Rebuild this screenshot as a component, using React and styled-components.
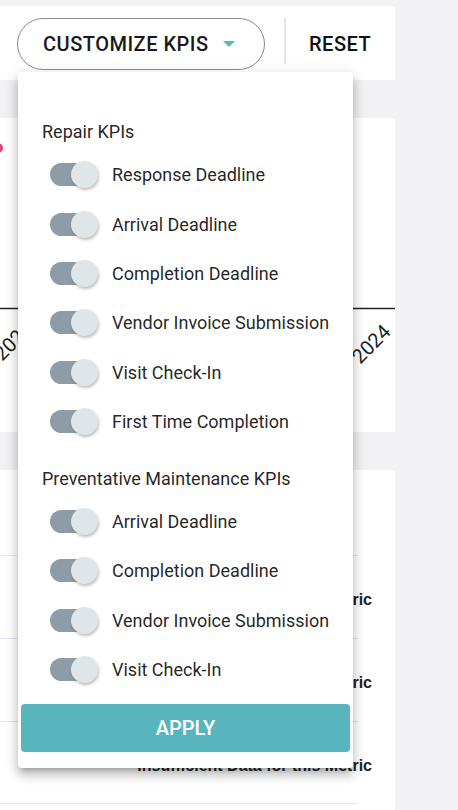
import styled, { createGlobalStyle } from "styled-components";

const GlobalStyle = createGlobalStyle`
  body {
    margin: 0;
    background: #f2f2f5;
    font-family: Roboto, "Noto Sans", sans-serif;
  }
`;

const Page = styled.div`
  width: 395px;
  min-height: 810px;
  padding-top: 6px;
  box-sizing: border-box;
  display: flex;
  flex-direction: column;
  gap: 38px;
`;

const Toolbar = styled.div`
  position: relative;
  height: 74px;
  background: #fff;
  display: flex;
  align-items: flex-start;
  padding: 12px 0 0 17px;
  box-sizing: border-box;
`;

const PillButton = styled.button`
  width: 248px;
  height: 52px;
  border: 1px solid #8c8c8c;
  border-radius: 26px;
  background: #fff;
  display: flex;
  align-items: center;
  gap: 14px;
  padding: 0 0 0 25px;
  font-family: Roboto, sans-serif;
  font-size: 20px;
  font-weight: 500;
  letter-spacing: 0.5px;
  color: #1a1a1a;
  cursor: pointer;
`;

const Divider = styled.div`
  width: 2px;
  height: 46px;
  margin-left: 19px;
  background: #e6e4f4;
`;

const TextButton = styled.button`
  height: 52px;
  margin-left: 23px;
  padding: 0;
  border: none;
  background: none;
  font-family: Roboto, sans-serif;
  font-size: 20px;
  font-weight: 500;
  letter-spacing: 0.5px;
  color: #111;
  cursor: pointer;
`;

const Menu = styled.div`
  position: absolute;
  left: 18px;
  top: 66px;
  width: 335px;
  height: 696px;
  box-sizing: border-box;
  padding: 50px 3px 15px;
  background: #fff;
  border-radius: 4px;
  box-shadow: 0 5px 5px -3px rgba(0, 0, 0, 0.2), 0 8px 10px 1px rgba(0, 0, 0, 0.14),
    0 3px 14px 2px rgba(0, 0, 0, 0.12);
  display: flex;
  flex-direction: column;
  z-index: 2;
`;

const GroupTitle = styled.div`
  padding-left: 21px;
  margin: ${(p) => (p.$first ? "0 0 8px" : "22.5px 0 8px")};
  font-size: 18px;
  line-height: 20px;
  color: rgba(0, 0, 0, 0.87);
`;

const KpiRow = styled.label`
  height: 49.4px;
  display: flex;
  align-items: center;
  gap: 15px;
  padding-left: 29px;
  font-size: 18px;
  color: rgba(0, 0, 0, 0.87);
  cursor: pointer;
`;

const Track = styled.span`
  width: 47px;
  height: 23px;
  border-radius: 12px;
  background: #8e9ca8;
  display: inline-flex;
  align-items: center;
  justify-content: flex-end;
  flex-shrink: 0;
`;

const Thumb = styled.span`
  width: 27px;
  height: 27px;
  margin-right: -1px;
  border-radius: 50%;
  background: #dee6ea;
  box-shadow: 1px 2px 3px rgba(0, 0, 0, 0.25);
`;

const ApplyButton = styled.button`
  height: 48px;
  margin-top: 10px;
  border: none;
  border-radius: 4px;
  background: #59b5bd;
  color: #fff;
  font-family: Roboto, sans-serif;
  font-size: 20px;
  font-weight: 500;
  cursor: pointer;
`;

const ChartCard = styled.div`
  height: 314px;
  background: #fff;
`;

const Table = styled.div`
  flex: 1;
  background: #fff;
  display: flex;
  flex-direction: column;
`;

const Row = styled.div`
  height: ${(p) => p.$h}px;
  box-sizing: border-box;
  padding: 5px 23px 0 0;
  display: flex;
  align-items: center;
  justify-content: flex-end;
  background: linear-gradient(#e7e5f5, #e7e5f5) left bottom / 358px 1px no-repeat;
  font-family: "Liberation Sans", Arial, sans-serif;
  font-weight: bold;
  font-size: 16px;
  color: #222;
`;

const repairKpis = [
  "Response Deadline",
  "Arrival Deadline",
  "Completion Deadline",
  "Vendor Invoice Submission",
  "Visit Check-In",
  "First Time Completion",
];

const pmKpis = [
  "Arrival Deadline",
  "Completion Deadline",
  "Vendor Invoice Submission",
  "Visit Check-In",
];

function Switch() {
  return (
    <Track>
      <Thumb />
    </Track>
  );
}

function Chart() {
  return (
    <svg width="395" height="314" viewBox="0 0 395 314">
      <circle cx="-2" cy="30" r="5" fill="#e3457d" />
      <line x1="0" y1="190.5" x2="395" y2="190.5" stroke="#222" strokeWidth="1.5" />
      <g fontFamily="Roboto, sans-serif" fontSize="20" fill="#222">
        <text transform="translate(34 212) rotate(-45)" textAnchor="end">
          2024
        </text>
        <text transform="translate(392 215) rotate(-45)" textAnchor="end">
          2024
        </text>
      </g>
    </svg>
  );
}

export default function App() {
  return (
    <>
      <GlobalStyle />
      <Page>
        <Toolbar>
          <PillButton>
            CUSTOMIZE KPIS
            <svg width="12" height="6" viewBox="0 0 12 6">
              <polygon points="0,0 12,0 6,6" fill="#5bb8c0" />
            </svg>
          </PillButton>
          <Divider />
          <TextButton>RESET</TextButton>
          <Menu>
            <GroupTitle $first>Repair KPIs</GroupTitle>
            {repairKpis.map((k) => (
              <KpiRow key={"r" + k}>
                <Switch />
                {k}
              </KpiRow>
            ))}
            <GroupTitle>Preventative Maintenance KPIs</GroupTitle>
            {pmKpis.map((k) => (
              <KpiRow key={"p" + k}>
                <Switch />
                {k}
              </KpiRow>
            ))}
            <ApplyButton>APPLY</ApplyButton>
          </Menu>
        </Toolbar>
        <ChartCard>
          <Chart />
        </ChartCard>
        <Table>
          <Row $h={86} />
          <Row $h={83}>Insufficient Data for this Metric</Row>
          <Row $h={83}>Insufficient Data for this Metric</Row>
          <Row $h={82}>Insufficient Data for this Metric</Row>
        </Table>
      </Page>
    </>
  );
}
